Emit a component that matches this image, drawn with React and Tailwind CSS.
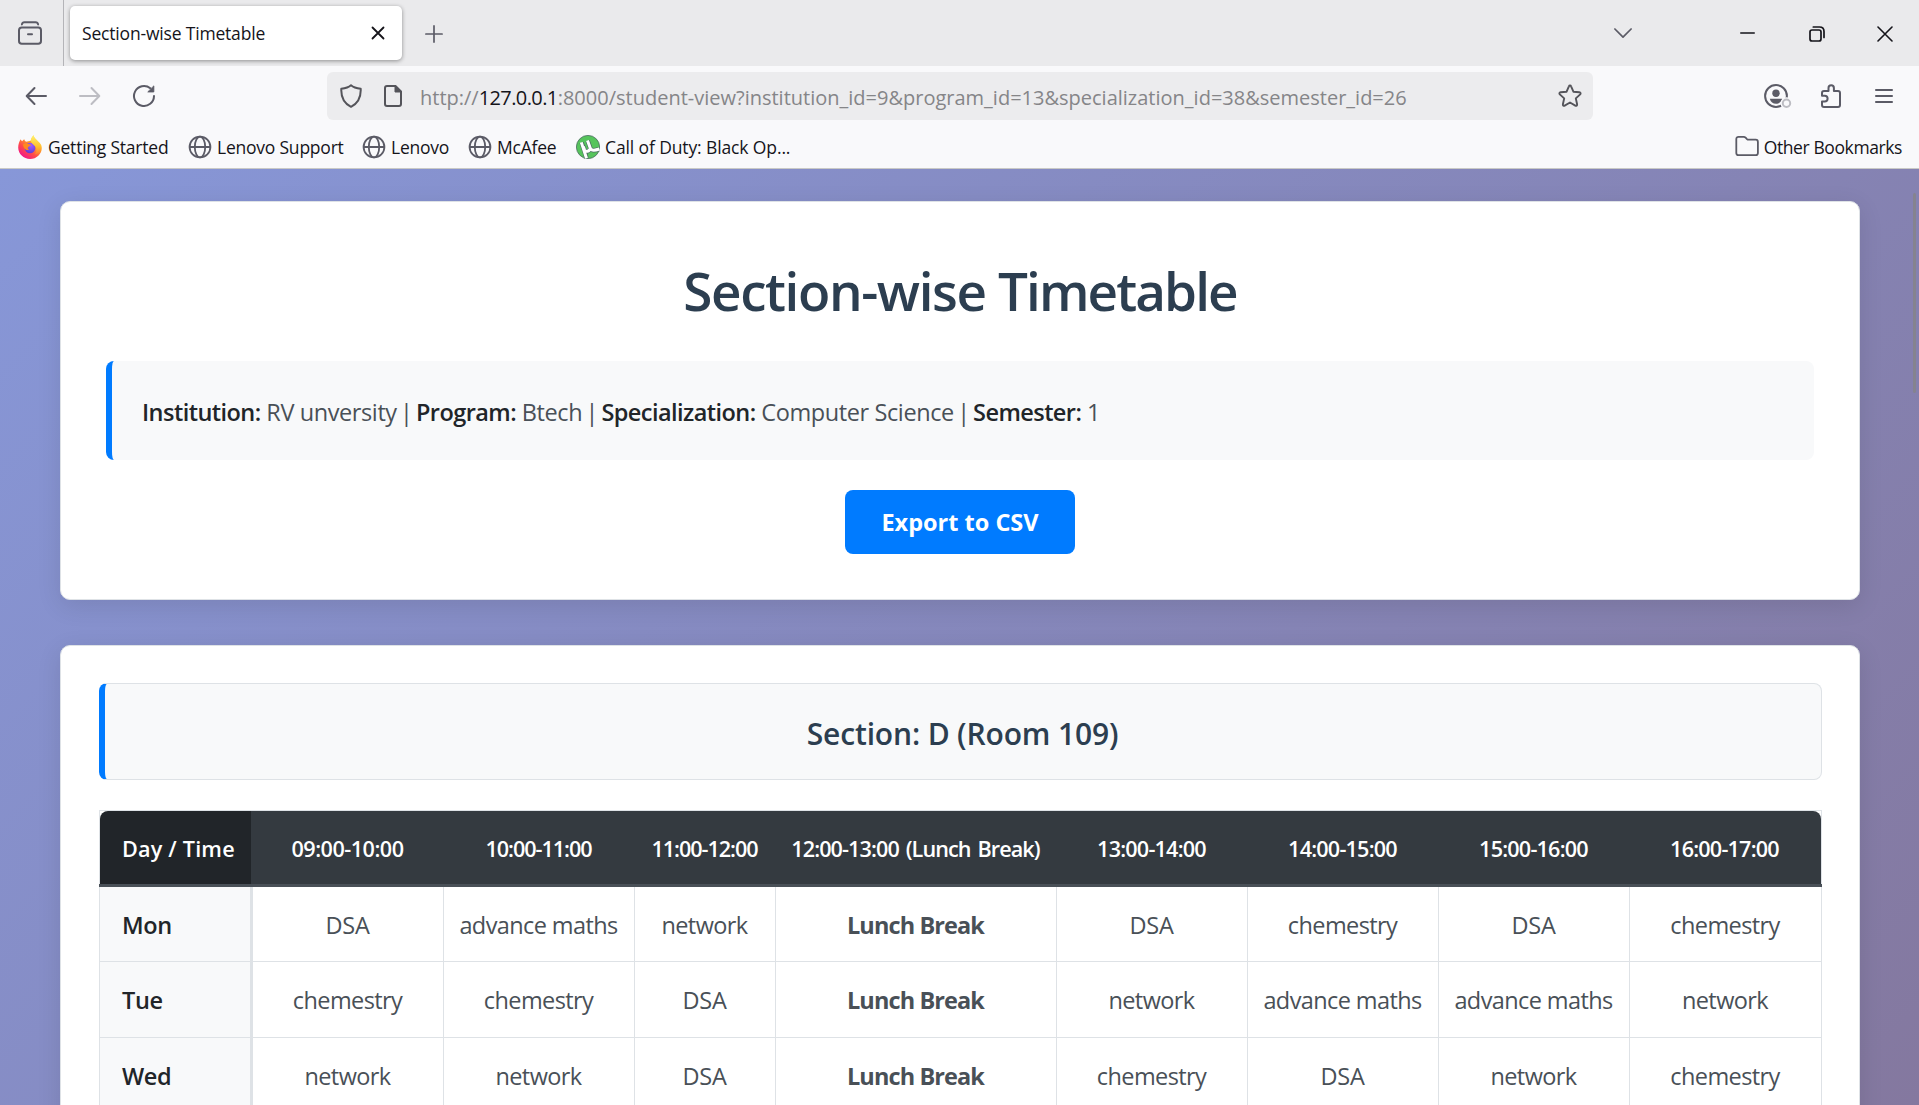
import React from "react";

const SLOTS = [
  { label: "09:00-10:00", tracking: "tracking-[-0.5px]" },
  { label: "10:00-11:00", tracking: "tracking-[-1.05px]" },
  { label: "11:00-12:00", tracking: "tracking-[-1.05px]" },
  { label: "12:00-13:00 (Lunch Break)", tracking: "tracking-[-0.9px] [word-spacing:2px]" },
  { label: "13:00-14:00", tracking: "tracking-[-0.8px]" },
  { label: "14:00-15:00", tracking: "tracking-[-0.8px]" },
  { label: "15:00-16:00", tracking: "tracking-[-0.8px]" },
  { label: "16:00-17:00", tracking: "tracking-[-0.8px]" },
];

const DAYS = [
  { day: "Mon", height: "h-[75px]", cells: ["DSA", "advance maths", "network", "Lunch Break", "DSA", "chemestry", "DSA", "chemestry"] },
  { day: "Tue", height: "h-[76px]", cells: ["chemestry", "chemestry", "DSA", "Lunch Break", "network", "advance maths", "advance maths", "network"] },
  { day: "Wed", height: "h-[76px]", cells: ["network", "network", "DSA", "Lunch Break", "chemestry", "DSA", "network", "chemestry"] },
];

const COLS = "grid grid-cols-[153px_191px_191px_141px_281px_191px_191px_191px_1fr]";

function Icon({ className, children, w = 24, h = 24, stroke = 2 }) {
  return (
    <svg
      width={w}
      height={h}
      viewBox={`0 0 ${w} ${h}`}
      fill="none"
      stroke="currentColor"
      strokeWidth={stroke}
      strokeLinecap="round"
      strokeLinejoin="round"
      className={`shrink-0 ${className || ""}`}
    >
      {children}
    </svg>
  );
}

function Globe({ className }) {
  return (
    <Icon className={className} stroke={1.8}>
      <circle cx="12" cy="12" r="10.4" />
      <ellipse cx="12" cy="12" rx="5.2" ry="10.4" />
      <path d="M1.8 12h20.4" />
    </Icon>
  );
}

function FirefoxLogo() {
  return (
    <svg width="24" height="24" viewBox="0 0 24 24" className="shrink-0">
      <defs>
        <linearGradient id="fxBody" x1="0.85" y1="0.1" x2="0.2" y2="0.95">
          <stop offset="0" stopColor="#fff44f" />
          <stop offset="0.35" stopColor="#ff9a2b" />
          <stop offset="0.65" stopColor="#ff4a4a" />
          <stop offset="1" stopColor="#f0128f" />
        </linearGradient>
        <linearGradient id="fxTail" x1="0.5" y1="0" x2="0.5" y2="1">
          <stop offset="0" stopColor="#fff36e" />
          <stop offset="0.6" stopColor="#ffc02d" />
          <stop offset="1" stopColor="#ff7a35" />
        </linearGradient>
        <radialGradient id="fxGlobe" cx="0.6" cy="0.25" r="0.8">
          <stop offset="0" stopColor="#a05cff" />
          <stop offset="1" stopColor="#5a3bd0" />
        </radialGradient>
      </defs>
      <path d="M2.6 4.2c.5 1 .9 1.5 1.6 2C5 5.4 5.5 4.8 6.3 4.3c.2 1.2.8 1.9 1.8 2.5l4.5-1C13.500 3.500 14 1.800 15.600.2c.4 2.200 1.600 3.300 3.300 5C21.600 7.700 23.800 9.300 23.800 13c0 6-5.200 11-11.700 11S.2 19 .2 12.600C.2 9.300 1.300 6.500 2.600 4.200z" fill="url(#fxBody)" />
      <circle cx="12" cy="13" r="5.3" fill="url(#fxGlobe)" />
      <path d="M15.600.2c.4 2.200 1.600 3.300 3.300 5 2.700 2.500 4.400 5.200 4 8.800-.6 3.500-3.500 5.500-6.200 5.200 2.200-2 2.100-5.700.6-7.700-1.500-2-4-2.800-4.500-5.700 0-2.100 1.300-4.200 2.800-5.600z" fill="url(#fxTail)" />
      <path d="M5.200 9.200c1.600-1.200 3.600-1.200 5.300-.2 1.100.6 2.400.6 2.500 1.100-.5 1.100-2.700 1.200-3.100 2.300-.3.900.3 1.900 1.400 2.300-1.600.8-4 .3-5-1.400-.8-1.300-1.300-2.700-1.100-4.100z" fill="#ff8a1f" />
    </svg>
  );
}

function TorrentLogo() {
  return (
    <svg width="24" height="24" viewBox="0 0 24 24" className="shrink-0">
      <circle cx="12" cy="12" r="11.6" fill="#56c45c" stroke="#4d6b62" strokeWidth="0.8" />
      <path d="M5.6 7.600l5 15.400M7.300 11.500l1.300 3.500c1 2.200 5.200 1.500 5.100-1.200M11.700 5.800l2.600 7.400c.9 2.400 4 2.600 8.400.9" fill="none" stroke="#4d6b62" strokeWidth="4.400" />
      <path d="M5.300 7.400l5.200 15.800M7.300 11.500l1.300 3.500c1 2.200 5.200 1.500 5.100-1.200M11.500 5.400l2.800 7.800c.9 2.400 4 2.600 9 .8" fill="none" stroke="#fff" strokeWidth="3" />
    </svg>
  );
}

function TabStrip() {
  return (
    <div className="flex h-[66px] items-stretch bg-[#eaeaec]">
      <div className="flex w-16 items-center border-r border-[#b4b4b8] pl-[18px] text-[#5b5b66]">
        <Icon>
          <path d="M3.9 3.4C4.2 1.8 5.2 1.2 6.4 1.2h11.200c1.200 0 2.200.6 2.500 2.200" />
          <rect x="1" y="6.4" width="22" height="16.4" rx="2.8" />
          <path d="M10 13.2h4" />
        </Icon>
      </div>
      <div className="mt-1.5 ml-1.5 flex h-[54px] w-[332px] items-center rounded-[5px] bg-white pr-[17px] pl-3 shadow-[0_1px_4px_rgba(0,0,0,0.4)]">
        <span className="grow text-[17.5px] tracking-[-0.18px] text-[#15141a]">Section-wise Timetable</span>
        <Icon w={14} h={14} stroke={1.8} className="text-[#15141a]">
          <path d="M1.5 1.5l11 11M12.5 1.5l-11 11" />
        </Icon>
      </div>
      <div className="flex grow items-center pt-0.5 text-[#5b5b66]">
        <Icon w={18} h={18} stroke={1.7} className="ml-[23px]">
          <path d="M9 .9v16.200M.9 9h16.200" />
        </Icon>
      </div>
      <div className="flex items-center text-[#15141a]">
        <Icon w={18} h={11} stroke={1.7} className="mr-[108px] text-[#5b5b66]">
          <path d="M.9 1l8.100 8.200L17.100 1" />
        </Icon>
        <Icon w={15} h={16} stroke={1.6} className="mr-[54px]">
          <path d="M.8 8h13.400" />
        </Icon>
        <Icon w={16} h={16} stroke={1.7} className="mt-0.5 mr-[52px]">
          <rect x="1" y="4" width="11" height="11" rx="2" />
          <path d="M4.300 1h6.200c3 0 4.500 1.500 4.500 4.500V11.500" />
        </Icon>
        <Icon w={16} h={16} stroke={1.6} className="mt-0.5 mr-[26px]">
          <path d="M1 1l14 14M15 1L1 15" />
        </Icon>
      </div>
    </div>
  );
}

function NavBar() {
  return (
    <div className="flex h-[60px] items-center text-[#5b5b66]">
      <Icon w={22} className="ml-[25px]">
        <path d="M21 12H2M9.500 4L1.700 12l7.800 8" />
      </Icon>
      <Icon w={22} className="ml-8 text-[#bdbdc3]">
        <path d="M1 12h19M12.500 4l7.800 8-7.800 8" />
      </Icon>
      <Icon className="ml-[31px]">
        <path d="M22 12a10 10 0 1 1-3.700-7.800" />
        <path d="M21.800 2.300v5.600h-5.600z" fill="currentColor" strokeWidth="1" />
      </Icon>
      <div className="ml-[171px] flex h-12 w-[1266px] items-center rounded-[6px] bg-[#ececee]">
        <Icon w={22} className="ml-[13px] text-[#54545a]">
          <path d="M11 1.200c2.500 2.200 5.500 3 9.700 3.600.4 8.400-2.700 14.400-9.700 18C4 19.200.9 13.200 1.300 4.800 5.500 4.200 8.500 3.400 11 1.200z" />
        </Icon>
        <Icon w={20} className="ml-[21px] text-[#54545a]">
          <path d="M4 2h8.500L18 7.500V20a2 2 0 0 1-2 2H4a2 2 0 0 1-2-2V4a2 2 0 0 1 2-2z" />
          <path d="M12 1.500V8h6.500z" fill="currentColor" strokeWidth="1" />
        </Icon>
        <div className="ml-[17px] grow pt-1 text-[20px] whitespace-pre text-[#858588]">
          http://<span className="tracking-[-0.6px] text-[#15141a]">127.0.0.1</span>:8000/student-view?institution_id=9&amp;program_id=13&amp;specialization_id=38&amp;semester_id=26
        </div>
        <Icon className="mr-[11px] text-[#54545a]" stroke={1.9}>
          <path d="M12 1.500c.5 0 .9.3 1.100.8l2.300 5.400 6 .6c1.200.1 1.600 1.300.8 2.100l-4.400 4 1.300 5.900c.2 1.200-.8 1.900-1.800 1.300L12 18.500l-5.300 3.100c-1 .6-2-.1-1.800-1.300l1.300-5.900-4.400-4c-.8-.8-.4-2 .8-2.100l6-.6 2.300-5.400c.2-.5.600-.8 1.100-.8z" />
        </Icon>
      </div>
      <Icon w={28} className="ml-[171px]">
        <circle cx="12" cy="12" r="10.9" />
        <circle cx="12" cy="9.3" r="3.7" fill="currentColor" stroke="none" />
        <path d="M5.800 14.800h12.400c-.8 3.200-3.300 5-6.200 5s-5.400-1.800-6.200-5z" fill="currentColor" stroke="none" />
        <circle cx="22.5" cy="19.3" r="6" fill="#f9f9fb" stroke="none" />
        <circle cx="22.5" cy="19.3" r="3.7" stroke="#bdbdc3" />
      </Icon>
      <Icon w={22} className="ml-7">
        <path d="M2 10.500V9a2 2 0 0 1 2-2h4.500V4a2.700 2.700 0 0 1 5.400 0v3H18a2 2 0 0 1 2 2v12a2 2 0 0 1-2 2H4a2 2 0 0 1-2-2v-3.500h2.700a2.900 2.900 0 0 0 0-5.800H2z" />
      </Icon>
      <Icon w={18} h={16} stroke={1.8} className="ml-[33px]">
        <path d="M.9 2h16.200M.9 8h16.200M.9 14h16.200" />
      </Icon>
    </div>
  );
}

function Bookmark({ icon, gap, children }) {
  return (
    <div className={`flex items-center ${gap}`}>
      {icon}
      <span>{children}</span>
    </div>
  );
}

function BookmarksBar() {
  return (
    <div className="flex h-[43px] items-center border-b border-[#c9c9c6] text-[17.5px] tracking-[-0.22px] whitespace-nowrap text-[#15141a]">
      <Bookmark icon={<FirefoxLogo />} gap="ml-[18px] w-[170px] gap-1.5">Getting Started</Bookmark>
      <Bookmark icon={<Globe className="text-[#5b5b66]" />} gap="w-[174px] gap-[5px]">Lenovo Support</Bookmark>
      <Bookmark icon={<Globe className="text-[#5b5b66]" />} gap="w-[106px] gap-[5px]">Lenovo</Bookmark>
      <Bookmark icon={<Globe className="text-[#5b5b66]" />} gap="w-[108px] gap-[5px]">McAfee</Bookmark>
      <Bookmark icon={<TorrentLogo />} gap="gap-[5px] tracking-[-0.12px]">Call of Duty: Black Op...</Bookmark>
      <div className="mr-[17px] ml-auto flex items-center gap-[5px] tracking-[-0.4px]">
        <Icon className="text-[#5b5b66]" stroke={1.8}>
          <path d="M3.500 1.800h5.200c.8 0 1.400.3 1.900.8l1.400 1.500c.4.400.9.600 1.500.6h7.200a2.200 2.200 0 0 1 2.200 2.200v11a2.200 2.200 0 0 1-2.200 2.200H3.500a2.200 2.200 0 0 1-2.200-2.200v-13.900a2.200 2.200 0 0 1 2.200-2.200z" />
        </Icon>
        <span>Other Bookmarks</span>
      </div>
    </div>
  );
}

function Label({ children }) {
  return <strong className="font-semibold tracking-[-0.55px] text-[#212529]">{children}</strong>;
}

function Pipe() {
  return <span className="-mx-[2.4px]">|</span>;
}

function SummaryCard() {
  return (
    <section className="rounded-[10px] border border-[#dee2e6] bg-white px-[45px] pt-[54px] pb-[45px] shadow-[0_6px_24px_rgba(0,0,0,0.1)]">
      <h1 className="mb-[35px] text-center text-[53px] leading-[70px] font-semibold text-[#2c3e50]">
        <span className="tracking-[-1.4px]">Section-wise </span>
        <span className="tracking-[-1.9px]">Timetable</span>
      </h1>
      <div className="mb-[30px] flex h-[99px] items-center rounded-[8px] border-l-[6px] border-[#007bff] bg-[#f8f9fa] pt-1 pl-[30px] text-[23.5px] tracking-[-0.4px] text-[#495057]">
        <p className="whitespace-nowrap">
          <Label>Institution:</Label> RV unversity <Pipe /> <Label>Program:</Label> Btech <Pipe /> <Label>Specialization:</Label> Computer Science <Pipe /> <Label>Semester:</Label> 1
        </p>
      </div>
      <button className="mx-auto flex h-16 w-[230px] items-center justify-center rounded-[8px] bg-[#007bff] pt-0.5 text-[23.5px] font-bold text-white">Export to CSV</button>
    </section>
  );
}

function cellStyle(subject) {
  if (subject === "Lunch Break") return "font-bold tracking-[-0.9px]";
  if (subject === "DSA") return "tracking-[-0.2px]";
  return "tracking-[-0.6px]";
}

function SectionCard() {
  return (
    <section className="mt-[45px] h-[520px] rounded-t-[10px] border border-[#dee2e6] bg-white pt-[37px] pr-[37px] pl-[38px] shadow-[0_6px_24px_rgba(0,0,0,0.1)]">
      <h2 className="mb-[30px] flex h-[97px] items-center justify-center rounded-[8px] border border-l-[6px] border-[#dee2e6] border-l-[#007bff] bg-[#f8f9fa] pt-1 pr-px text-[30px] font-semibold tracking-[-0.15px] text-[#2c3e50]">
        Section: D (Room 109)
      </h2>
      <div className="border-x border-t border-[#dee2e6] text-center text-[23.5px] text-[#495057]">
        <div className={`${COLS} -mr-px -ml-px h-[76px] border-b-[3px] border-[#495057] px-px text-[21.6px] font-semibold text-white`}>
          <div className="flex items-center rounded-tl-[8px] border-r-2 border-[#343a40] bg-[#212529] pt-[3px] pl-[22px] tracking-[0.2px]">Day / Time</div>
          {SLOTS.map((s, i) => (
            <div key={s.label} className={`flex items-center justify-center bg-[#343a40] pt-[3px] pr-[2px] whitespace-nowrap ${s.tracking} ${i === 7 ? "rounded-tr-[8px]" : ""}`}>
              {s.label}
            </div>
          ))}
        </div>
        {DAYS.map((row) => (
          <div key={row.day} className={`${COLS} ${row.height} border-b border-[#dee2e6]`}>
            <div className="flex items-center border-r-[3px] border-[#dee2e6] bg-[#f8f9fa] pt-[3px] pl-[22px] font-semibold tracking-[-0.4px] text-[#212529]">{row.day}</div>
            {row.cells.map((c, i) => (
              <div key={i} className={`flex items-center justify-center border-r border-[#dee2e6] pt-[3px] pr-px whitespace-nowrap last:border-r-0 ${cellStyle(c)}`}>
                {c}
              </div>
            ))}
          </div>
        ))}
      </div>
    </section>
  );
}

export default function App() {
  return (
    <div className="flex h-screen flex-col overflow-hidden bg-[#f9f9fb] font-['Open_Sans','Noto_Sans',sans-serif]">
      <header>
        <TabStrip />
        <NavBar />
        <BookmarksBar />
      </header>
      <main className="relative min-h-0 grow overflow-hidden bg-linear-[135deg,#8797d8,#84789f] pt-8 pr-[59px] pl-[60px]">
        <SummaryCard />
        <SectionCard />
        <div className="absolute top-6 right-[3px] h-[200px] w-[3px] rounded-full bg-[#85838f]" />
      </main>
    </div>
  );
}
